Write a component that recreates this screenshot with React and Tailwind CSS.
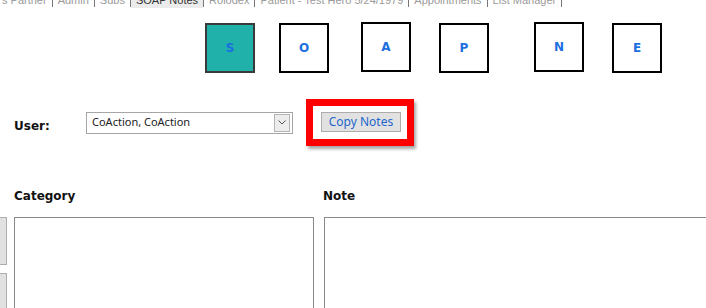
import React from "react";

const navItems = [
  { t: "s Partner" },
  { t: "Admin" },
  { t: "Subs" },
  { t: "SOAP Notes", active: true },
  { t: "Rolodex" },
  { t: "Patient - Test Hero 5/24/1979" },
  { t: "Appointments" },
  { t: "List Manager" },
];

function Box({ letter, active, className }) {
  return (
    <div
      className={
        "w-[50px] h-[50px] shrink-0 flex items-center justify-center font-bold text-[12px] text-[#1d6ee0] border-2 " +
        (active ? "bg-[#20b2aa] border-[#3a3a3a] " : "bg-white border-black ") +
        className
      }
    >
      {letter}
    </div>
  );
}

export default function App() {
  return (
    <div className="w-[706px] h-[308px] overflow-hidden bg-white relative font-['DejaVu_Sans',sans-serif]">
      {/* top nav (cut off) */}
      <div className="h-[8px] overflow-hidden">
        <div className="flex -mt-[8px] -ml-[3px] h-[16px] text-[11px] leading-[16px] text-[#9a9a9a] font-['Liberation_Sans',sans-serif]">
          {navItems.map((n, i) => (
            <div key={i} className="flex shrink-0">
              <div
                className={
                  "h-[16px] whitespace-nowrap shrink-0 px-[5px] " +
                  (n.active ? "bg-[#ebebeb] text-[#333]" : "")
                }
              >
                {n.t}
              </div>
              <div className="w-[1px] h-[15px] bg-[#777] shrink-0" />
            </div>
          ))}
        </div>
      </div>

      {/* SOAP boxes */}
      <div className="flex mt-[15px] pl-[205px] items-start">
        <Box letter="S" active className="" />
        <Box letter="O" className="ml-[24px]" />
        <Box letter="A" className="ml-[32px] -mt-[1px]" />
        <Box letter="P" className="ml-[28px]" />
        <Box letter="N" className="ml-[45px] -mt-[1px]" />
        <Box letter="E" className="ml-[28px]" />
      </div>

      {/* User row */}
      <div className="flex items-center mt-[26px] h-[47px]">
        <div className="w-[86px] shrink-0 pl-[14px] font-bold text-[12px] text-[#111] pt-[6px]">User:</div>
        <div className="w-[207px] shrink-0 h-[22px] border border-[#a6a6a6] flex items-center justify-between pl-[5px] pr-[2px] font-['Noto_Sans',sans-serif] text-[11px] text-[#222]">
          <span>CoAction, CoAction</span>
          <div className="w-[16px] h-[18px] bg-[#ececec] border border-[#b5b5b5] flex items-center justify-center">
            <svg width="8" height="5" viewBox="0 0 8 5">
              <path d="M0.5 0.5 L4 4 L7.5 0.5" fill="none" stroke="#555" strokeWidth="1" />
            </svg>
          </div>
        </div>
        <div className="ml-[13px] shrink-0 w-[108px] h-[47px] border-[7px] border-[#ff0000] shadow-[2px_3px_3px_rgba(0,0,0,0.35)] flex items-start pl-[8px] pt-[6px]">
          <button className="w-[80px] h-[20px] bg-[#e1e1e1] border border-[#adadad] text-[12px] text-[#2266cc] font-['Noto_Sans',sans-serif] leading-[18px]">
            Copy Notes
          </button>
        </div>
      </div>

      {/* Labels */}
      <div className="flex mt-[43px] h-[14px] items-center font-bold text-[12px] text-[#111]">
        <div className="w-[323px] shrink-0 pl-[14px]">Category</div>
        <div>Note</div>
      </div>

      {/* Boxes */}
      <div className="flex mt-[14px]">
        <div className="w-[14px] shrink-0 flex flex-col gap-[8px]">
          <div className="w-[7px] h-[48px] bg-[#e1e1e1] border border-[#adadad] border-l-0" />
          <div className="w-[7px] h-[48px] bg-[#e1e1e1] border border-[#adadad] border-l-0" />
        </div>
        <div className="w-[300px] shrink-0 h-[120px] border border-[#8a8a8e]" />
        <div className="ml-[10px] shrink-0 w-[400px] h-[120px] border border-[#8a8a8e]" />
      </div>
    </div>
  );
}
